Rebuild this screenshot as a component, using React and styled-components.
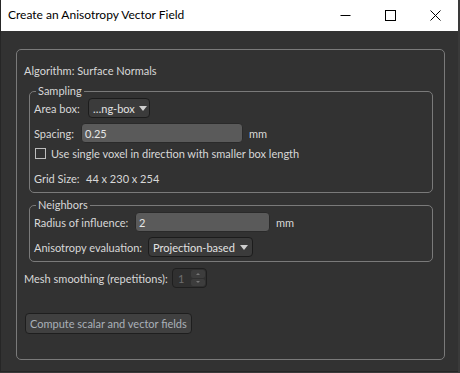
import React from 'react'
import styled, { createGlobalStyle } from 'styled-components'

const GlobalStyle = createGlobalStyle`
  html, body {
    margin: 0;
    padding: 0;
    background: #3a3a3a;
  }
  body {
    font-family: Lato, "Liberation Sans", sans-serif;
    font-size: 11px;
  }
`

const Window = styled.div`
  width: 458px;
  height: 372px;
  display: flex;
  flex-direction: column;
  background: #323232;
  border-left: 1px solid #262626;
  border-bottom: 1px solid #262626;
  box-sizing: border-box;
`

const TitleBar = styled.div`
  height: 31px;
  flex: none;
  display: flex;
  align-items: center;
  background: #fff;
  color: #000;
  padding-left: 7px;
`

const Title = styled.div`
  flex: 1;
  font-size: 12px;
  padding-bottom: 2px;
`

const Caption = styled.div`
  width: 45px;
  height: 31px;
  display: flex;
  align-items: center;
  justify-content: center;
`

const Body = styled.div`
  flex: 1;
  display: flex;
  flex-direction: column;
  padding: 18px 13px 11px 15px;
`

const OuterGroup = styled.div`
  flex: 1;
  border: 1px solid #7a7a7a;
  border-radius: 5px;
  padding: 12px 11px 0 7px;
  display: flex;
  flex-direction: column;
  color: #d8d8d8;
`

const Row = styled.div`
  display: flex;
  align-items: center;
  height: ${p => p.h || 20}px;
  margin-top: ${p => p.mt || 0}px;
  white-space: nowrap;
`

const Label = styled.div`
  width: ${p => (p.w ? `${p.w}px` : 'auto')};
  flex: none;
`

const Group = styled.fieldset`
  margin: ${p => p.mt}px 0 0 5px;
  padding: 0 4px 4px 4px;
  border: 1px solid #7a7a7a;
  border-radius: 5px;
  min-width: 0;
  display: flex;
  flex-direction: column;
`

const Legend = styled.legend`
  padding: 0 2px;
  margin-left: 2px;
  line-height: 14px;
  color: #d8d8d8;
`

const Combo = styled.div`
  box-sizing: border-box;
  width: ${p => p.w}px;
  height: 20px;
  background: #3b3b3b;
  border: 1px solid #1c1c1c;
  border-radius: 4px;
  display: flex;
  align-items: center;
  padding: 0 4px 0 4px;
  color: #e2e2e2;
`

const ComboText = styled.span`
  flex: 1;
`

const Arrow = styled.span`
  width: 0;
  height: 0;
  border-left: 4px solid transparent;
  border-right: 4px solid transparent;
  border-top: 5px solid #cfcfcf;
  margin: 1px 0 0 4px;
`

const Input = styled.div`
  box-sizing: border-box;
  width: ${p => p.w}px;
  height: 20px;
  background: #5a5a5a;
  border: 1px solid #2a2a2a;
  border-radius: 4px;
  display: flex;
  align-items: center;
  padding-left: 3px;
  color: #e6e6e6;
`

const Unit = styled.span`
  margin-left: 6px;
`

const CheckBox = styled.span`
  box-sizing: border-box;
  width: 11px;
  height: 11px;
  border: 1px solid #bdbdbd;
  margin: 0 5px 0 1px;
`

const Spin = styled.div`
  box-sizing: border-box;
  width: 35px;
  height: 20px;
  border: 1px solid #1f1f1f;
  border-radius: 4px;
  background: #303030;
  display: flex;
  align-items: stretch;
  color: #6e6e6e;
`

const SpinValue = styled.span`
  flex: 1;
  display: flex;
  align-items: center;
  padding-left: 5px;
`

const SpinButtons = styled.div`
  width: 14px;
  display: flex;
  flex-direction: column;
  gap: 1px;
  padding: 1px 1px 1px 0;
`

const SpinButton = styled.div`
  flex: 1;
  background: #3d3d3d;
  border-radius: 2px;
  display: flex;
  align-items: center;
  justify-content: center;
`

const TinyArrow = styled.span`
  width: 0;
  height: 0;
  border-left: 2px solid transparent;
  border-right: 2px solid transparent;
  ${p => (p.up ? 'border-bottom: 2px solid #777;' : 'border-top: 2px solid #777;')}
`

const Button = styled.div`
  box-sizing: border-box;
  width: 167px;
  height: 21px;
  margin: 25px 0 0 1px;
  background: #404040;
  border: 1px solid #1e1e1e;
  border-radius: 4px;
  display: flex;
  align-items: center;
  padding-left: 4px;
  white-space: nowrap;
  color: #aab0b8;
`

export default function App() {
  return (
    <>
      <GlobalStyle />
      <Window>
        <TitleBar>
          <Title>Create an Anisotropy Vector Field</Title>
          <Caption>
            <svg width="11" height="11" viewBox="0 0 11 11">
              <path d="M0.5 5.5h10" stroke="#000" strokeWidth="1" />
            </svg>
          </Caption>
          <Caption>
            <svg width="11" height="11" viewBox="0 0 11 11">
              <rect x="0.5" y="0.5" width="10" height="10" fill="none" stroke="#000" />
            </svg>
          </Caption>
          <Caption>
            <svg width="11" height="11" viewBox="0 0 11 11">
              <path d="M0.5 0.5l10 10M10.5 0.5l-10 10" stroke="#000" strokeWidth="1" />
            </svg>
          </Caption>
        </TitleBar>
        <Body>
          <OuterGroup>
            <Row h={16}>Algorithm: Surface Normals</Row>
            <Group mt={6}>
              <Legend>Sampling</Legend>
              <Row>
                <Label w={54}>Area box:</Label>
                <Combo w={62}>
                  <ComboText>…ng-box</ComboText>
                  <Arrow />
                </Combo>
              </Row>
              <Row mt={5}>
                <Label w={47}>Spacing:</Label>
                <Input w={162}>0.25</Input>
                <Unit>mm</Unit>
              </Row>
              <Row>
                <CheckBox />
                <span>Use single voxel in direction with smaller box length</span>
              </Row>
              <Row mt={5}>
                <Label w={52}>Grid Size:</Label>
                <span>44 x 230 x 254</span>
              </Row>
            </Group>
            <Group mt={5}>
              <Legend>Neighbors</Legend>
              <Row>
                <Label w={101}>Radius of influence:</Label>
                <Input w={135}>2</Input>
                <Unit>mm</Unit>
              </Row>
              <Row mt={5}>
                <Label w={114}>Anisotropy evaluation:</Label>
                <Combo w={105}>
                  <ComboText>Projection-based</ComboText>
                  <Arrow />
                </Combo>
              </Row>
            </Group>
            <Row mt={6}>
              <Label w={148}>Mesh smoothing (repetitions):</Label>
              <Spin>
                <SpinValue>1</SpinValue>
                <SpinButtons>
                  <SpinButton><TinyArrow up /></SpinButton>
                  <SpinButton><TinyArrow /></SpinButton>
                </SpinButtons>
              </Spin>
            </Row>
            <Button>Compute scalar and vector fields</Button>
          </OuterGroup>
        </Body>
      </Window>
    </>
  )
}
